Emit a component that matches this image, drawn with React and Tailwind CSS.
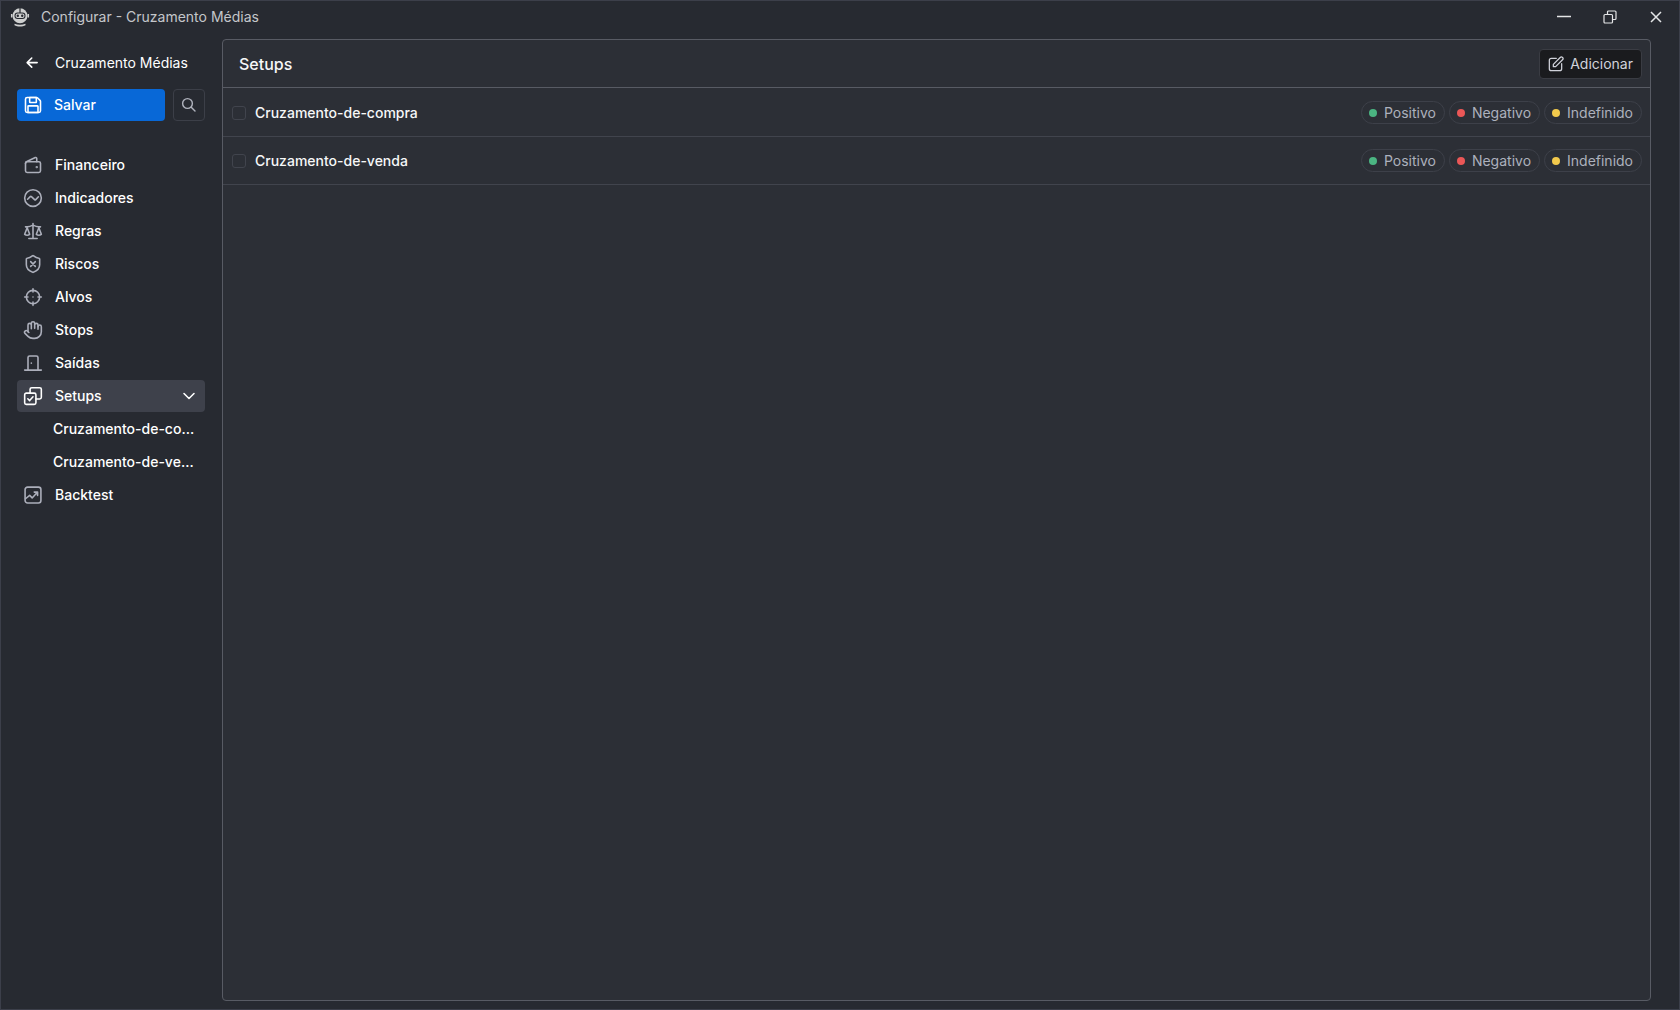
import { useState } from 'react'

const Icon = ({ size = 20, children, className = '' }) => (
  <svg
    width={size}
    height={size}
    viewBox="0 0 24 24"
    fill="none"
    stroke="currentColor"
    strokeWidth="1.9"
    strokeLinecap="round"
    strokeLinejoin="round"
    className={`shrink-0 ${className}`}
    aria-hidden="true"
  >
    {children}
  </svg>
)

const icons = {
  wallet: (
    <>
      <path d="M19 21H5a2 2 0 0 1-2-2V10a2 2 0 0 1 2-2h14a2 2 0 0 1 2 2v9a2 2 0 0 1-2 2Z" />
      <path d="M16.5 15a.5.5 0 1 1 0-1 .5.5 0 0 1 0 1Z" fill="currentColor" />
      <path d="M16.500 8V4.200a1.200 1.200 0 0 0-1.700-1.100L4.600 7.800A2.500 2.500 0 0 0 3 10" />
    </>
  ),
  indicators: (
    <>
      <circle cx="12" cy="12" r="10" />
      <path d="M5.500 13.500l3.200-3.200a1 1 0 0 1 1.400 0l3.800 3.600a1 1 0 0 0 1.400 0l3.200-3.400" />
    </>
  ),
  scale: (
    <>
      <path d="M12 3v18M7 21h10M3 7h2c2 0 5-1 7-2 2 1 5 2 7 2h2" />
      <path d="M16 16l3-8 3 8c-.87.65-1.920 1-3 1s-2.130-.35-3-1ZM2 16l3-8 3 8c-.87.65-1.920 1-3 1s-2.130-.35-3-1Z" />
    </>
  ),
  shield: (
    <>
      <path d="M20 13c0 5-3.500 7.500-7.660 8.950a1 1 0 0 1-.67-.01C7.500 20.500 4 18 4 13V6a1 1 0 0 1 1-1c2 0 4.500-1.200 6.240-2.720a1.170 1.170 0 0 1 1.520 0C14.510 3.810 17 5 19 5a1 1 0 0 1 1 1Z" />
      <path d="M9.200 9.200l5.600 5.600M14.800 9.200l-5.600 5.600" />
    </>
  ),
  target: (
    <>
      <circle cx="12" cy="12" r="8" />
      <path d="M12 2v4M12 18v4M2 12h4M18 12h4M12 12.010V12" />
    </>
  ),
  hand: (
    <>
      <path d="M18 11V6a2 2 0 0 0-4 0M14 10V4a2 2 0 0 0-4 0v2M10 10.500V6a2 2 0 0 0-4 0v8" />
      <path d="M18 8a2 2 0 1 1 4 0v6a8 8 0 0 1-8 8h-2c-2.800 0-4.500-.86-5.990-2.340l-3.600-3.600a2 2 0 0 1 2.830-2.820L7 15" />
    </>
  ),
  door: (
    <path d="M2 20.500h20M6 20.500V5.500a2 2 0 0 1 2-2h8a2 2 0 0 1 2 2v15M10 12.200V12" />
  ),
  setups: (
    <>
      <path d="M2 20V10.500A2 2 0 0 1 4 8.500h9.500a2 2 0 0 1 2 2V20a2 2 0 0 1-2 2H4a2 2 0 0 1-2-2Z" />
      <path d="M8.500 8.500V4a2 2 0 0 1 2-2H20a2 2 0 0 1 2 2v9.500a2 2 0 0 1-2 2h-4.500M5.800 15.300L8 17.500l4-4.500" />
    </>
  ),
  chart: (
    <>
      <rect x="2.500" y="2.500" width="19" height="19" rx="3" />
      <path d="M3 16.500l5-4 3 3 6.500-7M13.500 8.500h4V12.500" />
    </>
  ),
}

const menu = [
  { id: 'financeiro', label: 'Financeiro', icon: 'wallet' },
  { id: 'indicadores', label: 'Indicadores', icon: 'indicators' },
  { id: 'regras', label: 'Regras', icon: 'scale' },
  { id: 'riscos', label: 'Riscos', icon: 'shield' },
  { id: 'alvos', label: 'Alvos', icon: 'target' },
  { id: 'stops', label: 'Stops', icon: 'hand' },
  { id: 'saidas', label: 'Saídas', icon: 'door' },
  { id: 'setups', label: 'Setups', icon: 'setups', children: true },
  { id: 'backtest', label: 'Backtest', icon: 'chart' },
]

const setups = ['Cruzamento-de-compra', 'Cruzamento-de-venda']

const statuses = [
  { label: 'Positivo', dot: 'bg-[#4bb582]' },
  { label: 'Negativo', dot: 'bg-[#eb5757]' },
  { label: 'Indefinido', dot: 'bg-[#f2c94c]' },
]

function Logo() {
  return (
    <svg width="20" height="20" viewBox="0 0 20 20" className="shrink-0 text-[#cfd0d0]" aria-hidden="true">
      <circle cx="10" cy="8.700" r="7.500" fill="currentColor" />
      <path d="M10 1v5" stroke="#272a31" strokeWidth="1.200" />
      <rect x="4.500" y="5.500" width="11" height="6.500" rx="3" fill="#272a31" />
      <rect x="5.500" y="6.500" width="9" height="4.500" rx="2.200" fill="currentColor" />
      <circle cx="7.800" cy="8.700" r="1.200" fill="#272a31" />
      <circle cx="12.200" cy="8.700" r="1.200" fill="#272a31" />
      <path d="M1.700 7v3.600M18.300 7v3.600" stroke="currentColor" strokeWidth="1.500" />
      <path d="M4.500 16.800c3.200 1.200 7.800 1.200 11 0v1.400c-2.800 1.700-8.200 1.700-11 0Z" fill="currentColor" />
    </svg>
  )
}

function TitleBar() {
  return (
    <header className="flex h-8 items-center justify-between pl-[9px] text-[#c4c6ca]">
      <div className="flex items-center gap-[11px]">
        <Logo />
        <h1 className="text-sm">Configurar - Cruzamento Médias</h1>
      </div>
      <div className="flex h-full text-[#e4e5e7]">
        <button aria-label="Minimizar" className="flex w-[46px] items-center justify-center">
          <svg width="14" height="14" viewBox="0 0 14 14" fill="none" stroke="currentColor" strokeWidth="1.500"><path d="M0 6.500h14" /></svg>
        </button>
        <button aria-label="Restaurar" className="flex w-[46px] items-center justify-center">
          <svg width="14" height="14" viewBox="0 0 14 14" fill="none" stroke="currentColor" strokeWidth="1.200">
            <rect x="1" y="4.500" width="8.500" height="8.500" rx="1" />
            <path d="M4.500 4.500V2a1 1 0 0 1 1-1H12a1 1 0 0 1 1 1v6.500a1 1 0 0 1-1 1H9.500" />
          </svg>
        </button>
        <button aria-label="Fechar" className="flex w-[46px] items-center justify-center">
          <svg width="12" height="12" viewBox="0 0 12 12" fill="none" stroke="currentColor" strokeWidth="1.500"><path d="M1 1l10 10M11 1L1 11" /></svg>
        </button>
      </div>
    </header>
  )
}

function Sidebar({ active, onSelect }) {
  return (
    <aside className="flex w-[221px] shrink-0 flex-col pt-[14px] pr-[17px] pl-4 text-sm text-white">
      <a href="#" className="flex h-8 items-center gap-3 px-[6px]">
        <Icon>
          <path d="M17 11.500H5m0 0L10.500 6M5 11.500l5.500 5.500" />
        </Icon>
        Cruzamento Médias
      </a>

      <div className="mt-[10px] flex gap-2">
        <button className="flex h-8 grow items-center gap-[11px] rounded bg-[#0868d7] px-[6px] font-medium text-white">
          <Icon>
            <path d="M3 19V5a2 2 0 0 1 2-2h11.200a2 2 0 0 1 1.400.6l2.800 2.800a2 2 0 0 1 .6 1.400V19a2 2 0 0 1-2 2H5a2 2 0 0 1-2-2Z" />
            <path d="M8.600 9h6.800a.6.6 0 0 0 .6-.6V3H8v5.400a.6.6 0 0 0 .6.6ZM6 13.600V21h12v-7.400a.6.6 0 0 0-.6-.6H6.600a.6.6 0 0 0-.6.6Z" />
          </Icon>
          Salvar
        </button>
        <button aria-label="Buscar" className="flex size-8 items-center justify-center rounded border border-[#3c3f48] text-[#b0b3bd]">
          <Icon size={18}>
            <path d="M15 15l5 5M3.500 10a6.500 6.500 0 1 0 13 0 6.500 6.500 0 0 0-13 0Z" />
          </Icon>
        </button>
      </div>

      <nav className="mt-7 flex flex-col gap-px font-medium">
        {menu.map((item) => (
          <div key={item.id} className="flex flex-col gap-px">
            <button
              onClick={() => onSelect(item.id)}
              className={`flex h-8 items-center gap-3 rounded px-[6px] ${active === item.id ? 'bg-[#3e414b]' : ''}`}
            >
              <Icon className={active === item.id ? 'text-white' : 'text-[#acafbb]'}>{icons[item.icon]}</Icon>
              {item.label}
              {item.children && (
                <Icon className="ml-auto">
                  <path d="M6 9l6 6 6-6" />
                </Icon>
              )}
            </button>
            {item.children &&
              setups.map((name) => (
                <a key={name} href="#" className="flex h-8 items-center pr-2 pl-9">
                  <span className="truncate">{name}</span>
                </a>
              ))}
          </div>
        ))}
      </nav>
    </aside>
  )
}

function SetupRow({ name }) {
  return (
    <li className="flex items-center justify-between gap-4 border-b border-[#41444d] py-3 pr-2 pl-[9px]">
      <label className="flex items-center gap-[9px] text-sm font-medium text-[#f6f7f8]">
        <input type="checkbox" className="size-[14px] appearance-none rounded-[3px] border border-[#41444d] checked:bg-[#0868d7]" />
        {name}
      </label>
      <div className="flex gap-1">
        {statuses.map((s) => (
          <span key={s.label} className="flex h-[23px] items-center gap-[7px] rounded-full border border-[#3d4049] pr-2 pl-[7px] text-sm text-[#adb1bd]">
            <span className={`size-2 rounded-full ${s.dot}`} />
            {s.label}
          </span>
        ))}
      </div>
    </li>
  )
}

export default function App() {
  const [active, setActive] = useState('setups')

  return (
    <div className="flex min-h-screen flex-col border border-[#3c3f4a] bg-[#272a31] font-['Inter',sans-serif]">
      <TitleBar />
      <div className="flex grow">
        <Sidebar active={active} onSelect={setActive} />
        <main className="mt-[6px] mr-7 mb-2 grow rounded border border-[#585b64] bg-[#2c2f36]">
          <div className="flex h-12 items-center justify-between border-b border-[#585b64] pr-2 pl-4">
            <h2 className="text-base font-medium text-[#f6f7f8]">Setups</h2>
            <button className="flex h-[30px] items-center gap-[6px] rounded border border-[#3a3c43] bg-[#1a1b1e] px-2 text-sm text-[#d0d2da]">
              <Icon size={16}>
                <path d="M12.500 3.500H5a3 3 0 0 0-3 3V19a3 3 0 0 0 3 3h12.500a3 3 0 0 0 3-3v-7.500" />
                <path d="M8 16v-3.500L18.300 2.200a2.400 2.400 0 0 1 3.500 3.500L11.500 16H8Z" />
              </Icon>
              Adicionar
            </button>
          </div>
          <ul className="pt-px">
            {setups.map((name) => (
              <SetupRow key={name} name={name} />
            ))}
          </ul>
        </main>
      </div>
    </div>
  )
}
